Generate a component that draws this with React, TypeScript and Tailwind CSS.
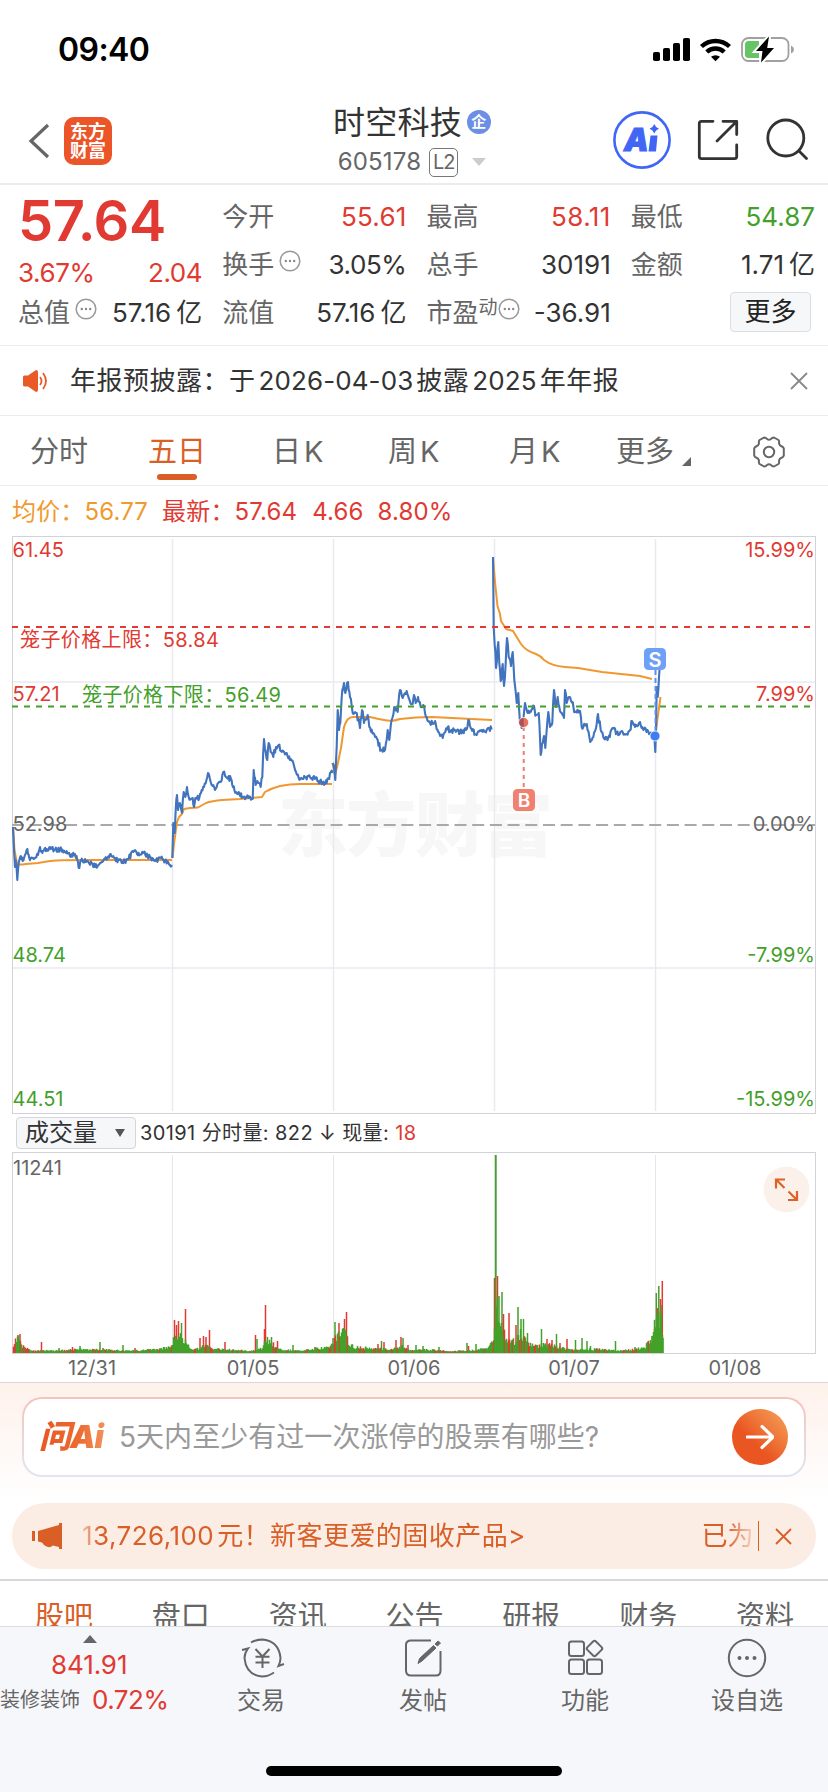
import React from 'react';

type Point = [number, number];

// price curves, one list per trading day
const priceDays: Point[][] = [
  [[13, 827], [14, 850], [15, 867], [15.7, 860], [17.3, 880], [18.7, 863], [20.7, 856], [22.7, 861], [25, 855], [27.3, 849], [29.3, 858], [33, 858], [38, 855], [40, 847], [42.3, 853], [46.7, 849], [50, 847], [54.3, 850], [60, 849], [65, 852], [70, 856], [75, 854], [77.3, 860], [79.3, 868], [81, 860], [86.7, 861], [91.7, 863], [95, 867], [100, 863], [105, 859], [110.7, 854], [115, 858], [121.7, 863], [128, 859], [134, 851], [137, 854], [143, 853], [150, 857], [155, 861], [160, 858], [165, 861], [170, 865], [172, 865]],
  [[172.3, 858], [173.3, 823], [174.7, 833], [175.7, 810], [177, 795], [178, 810], [179.7, 803], [182, 813], [183.7, 792], [185.3, 797], [187, 787], [188.7, 797], [192.7, 798], [194, 807], [196, 798], [199.3, 798], [201.7, 790], [204, 787], [208, 773], [210.7, 782], [215, 790], [218.3, 783], [220.7, 782], [223.3, 772], [226, 777], [228.7, 776], [232.3, 785], [236, 792], [238.7, 792], [242.7, 797], [248.3, 798], [252.7, 799], [253.7, 770], [255.7, 785], [258.3, 783], [260.7, 787], [262.3, 777], [264, 739], [265.7, 752], [267.3, 760], [268.7, 743], [270.7, 752], [273.3, 757], [276, 747], [278.7, 745], [281.7, 752], [286.7, 753], [290, 760], [293.3, 763], [296, 772], [298.7, 778], [305, 777], [311.7, 778], [314, 776], [318.3, 781], [326.7, 783], [330, 773], [332.5, 773]],
  [[332.7, 763], [335.3, 780], [336.7, 747], [337.7, 710], [339, 730], [340.3, 723], [342.3, 690], [344, 683], [345.3, 693], [348, 682], [350, 697], [352.7, 713], [356, 713], [360, 728], [362, 710], [364, 723], [367.7, 715], [369.3, 727], [373.3, 733], [377.7, 740], [381, 750], [385, 750], [387.7, 730], [389.3, 740], [391.7, 720], [395, 707], [397.7, 712], [400, 690], [402.7, 698], [406.7, 691], [408.7, 698], [412, 704], [414, 695], [415.7, 703], [418, 697], [420.7, 707], [423.3, 705], [426.7, 717], [430, 723], [435, 721], [438.3, 732], [442.7, 738], [445.3, 732], [447.7, 727], [450, 732], [455, 730], [460, 732], [466, 730], [468.3, 720], [470.7, 728], [476.7, 735], [481.7, 730], [486.7, 730], [492.3, 728]],
  [[493, 557], [493.7, 627], [494.7, 645], [496, 668], [498.3, 642], [499.3, 663], [500.7, 681], [502.7, 664], [504, 686], [505.7, 663], [507, 638], [508.7, 657], [511, 666], [512.7, 652], [514.3, 680], [516.7, 703], [518.3, 693], [520, 723], [521.7, 728], [523.3, 720], [525, 703], [526.7, 710], [529.3, 713], [534, 706], [536, 715], [538.7, 713], [540.7, 755], [542.7, 743], [544, 736], [545.3, 748], [546.7, 730], [548.3, 712], [550, 727], [552.3, 723], [554, 690], [556, 707], [557.7, 697], [560, 711], [564, 718], [565, 690], [566.7, 703], [569.3, 697], [572.7, 702], [575, 712], [580, 711], [581.7, 727], [586.7, 724], [590.3, 742], [593.3, 737], [596, 728], [598, 714], [600.7, 730], [603.3, 737], [608.3, 738], [612.7, 728], [616.7, 733], [626.7, 734], [630, 730], [632, 721], [635, 727], [640, 722], [643.3, 730], [647.3, 730], [650, 734], [652.7, 734]],
  [[654, 737], [655.3, 752], [656, 730], [656.7, 687], [657.7, 697], [659, 677], [660, 663], [660.7, 657]],
];

const avgDays: string[] = [
  'M13 827 L14.5 850 L17 864 Q19 865 26 864 L38 863 L50 861 Q62 860 80 860 L172 860',
  'M172.5 858 L174.5 840 L177 822 L179 817 L182 814 L184 809 L190 808 L198 807.5 L206 803 Q212 801 222 800 L240 799 L262 797 L265 792 Q272 788 280 786 Q290 784 300 784 L332 784',
  'M332.5 763 L335 775 L337.5 765 L341 748 L344 727 Q347 717 353 717 L370 717 Q378 719 384 720 Q392 722 400 719 Q416 717 432 717 L492 720',
  'M493 557 L495 582 L497.5 606 L500 614 L501 621 L506 629 L513 631 L521 644 Q526 651 536 654 Q541 656 544 660 Q552 666 565 667 L578 668 L602 672 L640 676 L648 678 L652 679',
  'M655.5 735 L658 715 L660.5 697',
];

// small fixed-seed generator, keeps the drawing identical on every render
function makeNoise(seed: number) {
  let s = seed;
  return () => {
    s = (s * 16807) % 2147483647;
    return s / 2147483647;
  };
}

function pricePath(points: Point[], seed: number) {
  const noise = makeNoise(seed);
  let d = `M${points[0][0]} ${points[0][1]}`;
  for (let i = 1; i < points.length; i++) {
    const [x0, y0] = points[i - 1];
    const [x1, y1] = points[i];
    const steps = Math.max(1, Math.round((x1 - x0) / 0.8));
    const amp = Math.abs(y1 - y0) > 8 ? 5 : 3.4;
    for (let k = 1; k < steps; k++) {
      const t = k / steps;
      d += ` L${(x0 + (x1 - x0) * t).toFixed(1)} ${(y0 + (y1 - y0) * t + (noise() - 0.5) * amp * 1.5).toFixed(1)}`;
    }
    d += ` L${x1} ${y1}`;
  }
  return d;
}

// ceiling of the ordinary volume bars: [x, height]
const volumeLevel: Point[] = [
  [13, 9], [16, 16], [19, 16], [22, 9], [27, 5], [34, 3], [60, 3], [80, 5], [100, 4], [130, 3], [150, 4], [162, 5], [172, 10], [174, 18], [179, 22], [186, 14], [190, 5], [200, 5], [206, 12], [211, 5], [230, 4], [252, 2.5], [262, 6], [267, 16], [275, 9], [282, 4], [300, 3], [322, 6], [332, 10], [336, 20], [341, 22], [345, 26], [349, 12], [354, 7], [370, 6], [390, 5], [402, 8], [410, 4], [430, 4], [450, 2.5], [470, 3], [488, 6], [493, 14], [496, 62], [500, 36], [504, 24], [510, 15], [516, 14], [521, 25], [526, 14], [535, 8], [542, 10], [555, 9], [565, 5], [580, 4], [600, 5], [616, 3], [632, 4], [645, 7], [652, 18], [656, 44], [661, 46], [663, 14],
];

// single tall bars: [x, height, rising]
const volumeSpikes: [number, number, boolean][] = [
  [18, 18, true], [20, 19, true], [41.5, 11, true], [59, 5, false], [72.5, 6, true], [80, 7, false], [100, 11, false], [103, 5, true], [123, 8, false], [135, 5, true],
  [174.5, 33, true], [176.5, 28, true], [178.5, 32, true], [181.5, 30, false], [185.5, 44, true], [200, 15, true], [203.5, 17, true], [206, 16, true], [209.5, 23, true], [225, 11, true], [255.5, 18, true], [257, 14, false], [264.5, 24, true], [265.5, 48, true], [271.5, 16, false], [277.5, 12, true], [293, 8, false], [315, 6, true],
  [333, 15, false], [335, 31, false], [339, 30, true], [343, 24, true], [344.5, 34, true], [346.5, 41, true], [378, 9, true], [381.5, 12, false], [384, 11, true], [396, 13, true], [401, 16, true], [403, 15, false], [408, 8, true], [416, 8, false], [423, 7, false], [439, 6, false], [467, 10, false], [468.5, 7, true], [476, 9, false],
  [494.5, 75, true], [497.5, 77, true], [499, 57, false], [502, 61, false], [503.5, 39, true], [509, 40, true], [516, 28, true], [518, 46, false], [521, 34, false], [523.5, 34, false], [527.5, 20, false], [541.5, 24, false], [547, 14, true], [552, 13, true], [556.5, 19, false], [560, 10, true], [567, 14, true], [575.5, 13, false], [582, 15, false], [587, 12, false], [590.5, 7, false], [615.5, 12, false], [635, 6, false], [647, 10, true], [652, 17, false], [654.5, 24, true], [656.3, 60, false], [657.8, 45, true], [658.8, 67, false], [660.5, 54, true], [661, 48, false], [662.3, 72, true], [663, 15, false],
];

function levelAt(x: number) {
  for (let i = 1; i < volumeLevel.length; i++) {
    const [x0, h0] = volumeLevel[i - 1];
    const [x1, h1] = volumeLevel[i];
    if (x <= x1) return h0 + ((h1 - h0) * (x - x0)) / (x1 - x0);
  }
  return 0;
}

function buildVolume() {
  const noise = makeNoise(77);
  const bars: [number, number, boolean][] = [];
  for (let x = 13.5; x < 663; x += 1) {
    const red = noise() < 0.2;
    bars.push([x, Math.max(1.5, levelAt(x) * (0.55 + noise() * 0.5)), red]);
  }
  return [...volumeSpikes, ...bars];
}

const volumeBars = buildVolume();

const RED = '#e03a32';
const GREEN = '#43a02a';

function Dots({ className = '' }: { className?: string }) {
  return (
    <svg className={`h-[22px] w-[22px] shrink-0 ${className}`} viewBox="0 0 22 22" fill="none">
      <circle cx="11" cy="11" r="9.8" stroke="#999" strokeWidth="1.5" />
      <circle cx="6.8" cy="11" r="1.2" fill="#888" />
      <circle cx="11" cy="11" r="1.2" fill="#888" />
      <circle cx="15.2" cy="11" r="1.2" fill="#888" />
    </svg>
  );
}

function StatusBar() {
  return (
    <div className="flex h-[98px] shrink-0 items-center justify-between pt-[2px] pr-[33px] pl-[58px]">
      <span className="text-[32px] leading-none font-semibold tracking-[-0.6px] text-black">09:40</span>
      <svg className="h-[30px] w-[144px]" viewBox="651 35 144 30">
        <rect x="653" y="52" width="7" height="9" rx="1.8" />
        <rect x="663" y="48" width="7" height="13" rx="1.8" />
        <rect x="673" y="43" width="7" height="18" rx="1.8" />
        <rect x="683" y="38" width="7" height="23" rx="1.8" />
        <g fill="none" stroke="#000" strokeWidth="4.4">
          <path d="M701.5 46.5 a20.5 20.5 0 0 1 28 0" />
          <path d="M706.8 52 a12.6 12.6 0 0 1 17.4 0" />
        </g>
        <path d="M711 56.8 a7 7 0 0 1 9 0 L715.5 61.3z" />
        <rect x="742" y="38" width="46.5" height="23" rx="6.5" fill="none" stroke="#a0a0a0" strokeWidth="1.8" />
        <path d="M791 45.5 q3 1.5 3 4 t-3 4z" fill="#a0a0a0" />
        <path d="M748.5 41 H759 V58 H748.5 Q745 58 745 54.5 V44.5 Q745 41 748.5 41z" fill="#65c466" />
        <path d="M769 36.5 L756 51 H762.5 L761 62.5 L774 48 H767.2z" stroke="#fff" strokeWidth="4" />
        <path d="M769 36.5 L756 51 H762.5 L761 62.5 L774 48 H767.2z" />
      </svg>
    </div>
  );
}

function Header() {
  return (
    <div className="flex h-[87px] shrink-0 items-center border-b-2 border-[#ececec] pl-7">
      <div className="flex w-[299px] items-center">
        <svg className="h-[36px] w-[22px]" viewBox="0 0 22 36" fill="none" stroke="#666" strokeWidth="3.2">
          <path d="M20 2 L3 18 L20 34" />
        </svg>
        <div className="ml-[14px] flex h-[48px] w-[48px] flex-col items-center justify-center rounded-[10px] bg-[#ec5528] text-[18px] leading-[19px] font-bold text-white">
          <span>东方</span>
          <span>财富</span>
        </div>
      </div>
      <div className="flex w-[170px] flex-col items-center">
        <div className="flex items-center gap-[5px] text-[32px] leading-[40px] tracking-[0.2px] text-[#333]">
          时空科技
          <span className="mb-[3px] flex h-6 w-6 items-center justify-center rounded-full bg-[#6b8fe6] text-[15px] leading-none font-bold text-white">企</span>
        </div>
        <div className="mt-[3px] flex items-center text-[24px] leading-[32px] text-[#666]">
          <span className="tracking-[0.2px]">605178</span>
          <span className="ml-[8px] flex h-[29px] w-[29px] items-center justify-center rounded-[5px] border-[1.5px] border-[#777] text-[20px] leading-none tracking-[-1px]">L2</span>
          <svg className="ml-[14px] h-[8px] w-[14px]" viewBox="0 0 14 8">
            <path d="M0 0 H14 L7 8z" fill="#ccc" />
          </svg>
        </div>
      </div>
      <svg className="mb-[2px] ml-[115px] h-[60px] w-[200px]" viewBox="612 110 200 60" fill="none">
        <circle cx="642" cy="140" r="27.6" stroke="#4166f5" strokeWidth="2.6" />
        <text x="624" y="151" className="fill-[#4166f5] stroke-[#4166f5] text-[31px] font-black italic" strokeWidth="1">A</text>
        <path d="M650.5 135.5 H657.5 L656 151.5 H648.5z" fill="#4166f5" />
        <path d="M654.3 124 Q655.5 127.5 659 128.7 Q655.5 130 654.3 133.5 Q653 130 649.5 128.7 Q653 127.5 654.3 124z" fill="#4166f5" />
        <g stroke="#333" strokeWidth="2.8" strokeLinecap="round" strokeLinejoin="round">
          <path d="M713 121.3 H701.5 Q699.3 121.3 699.3 123.5 V156.5 Q699.3 158.7 701.5 158.7 H734.5 Q736.7 158.7 736.7 156.5 V145" />
          <path d="M723 121.3 H736.7 V134.5 M736 122 L717 141" />
          <circle cx="785.8" cy="138" r="18" />
          <path d="M799 151 L806.5 158.5" />
        </g>
      </svg>
    </div>
  );
}

type CellProps = { label: string; value: string; unit?: string; tone?: string; info?: boolean; sup?: string };

function Cell({ label, value, unit, tone = 'text-[#333]', info, sup }: CellProps) {
  return (
    <div className="flex h-12 items-center justify-between whitespace-nowrap">
      <span className="flex items-center text-[#666]">
        {label}
        {sup && <span className="mb-3 text-[19px]">{sup}</span>}
        {info && <Dots className={sup ? 'mb-2' : 'mb-2 ml-[5px]'} />}
      </span>
      <span className={tone}>
        {value}
        {unit && <span className="ml-[5px]">{unit}</span>}
      </span>
    </div>
  );
}

function Quote() {
  return (
    <div className="grid h-[161px] shrink-0 grid-cols-4 gap-x-5 border-b border-[#ececec] pt-[8px] pr-[13px] pl-[18px] text-[26px] leading-none">
      <div className="text-[#e03a32]">
        <div className="flex h-[55px] items-center text-[56px] font-semibold tracking-[-0.4px]">57.64</div>
        <div className="flex h-[41px] items-center justify-between pt-[8px] tracking-[-0.4px]">
          <span>3.67%</span>
          <span>2.04</span>
        </div>
        <Cell label="总值" value="57.16" unit="亿" info />
      </div>
      <div>
        <Cell label="今开" value="55.61" tone="text-[#e03a32] tracking-[0.2px]" />
        <Cell label="换手" value="3.05%" tone="text-[#333] tracking-[-0.4px]" info />
        <Cell label="流值" value="57.16" unit="亿" />
      </div>
      <div>
        <Cell label="最高" value="58.11" tone="text-[#e03a32] tracking-[0.4px]" />
        <Cell label="总手" value="30191" />
        <Cell label="市盈" sup="动" value="-36.91" info />
      </div>
      <div>
        <Cell label="最低" value="54.87" tone="text-[#43a02a]" />
        <Cell label="金额" value="1.71" unit="亿" />
        <div className="flex h-12 items-center justify-end pr-[4px] pb-[2px]">
          <span className="flex h-[40px] w-[81px] items-center justify-center rounded-[4px] border-[1.5px] border-[#dcdee3] bg-[#f6f7f9] text-[#222]">更多</span>
        </div>
      </div>
    </div>
  );
}

function Notice() {
  return (
    <div className="flex h-[70px] shrink-0 items-center border-b border-[#ececec] pr-5 pl-[22px]">
      <svg className="h-[24px] w-[28px]" viewBox="0 0 28 24">
        <path d="M1 8 Q1 6.5 2.5 6.5 H6 L14 1 Q16 1 16 3 V21 Q16 23 14 23 L6 17.5 H2.5 Q1 17.5 1 16z" fill="#ea5a27" />
        <path d="M18 8 Q21 12 18 16 M21 4 Q27 12 21 20" fill="none" stroke="#ea5a27" strokeWidth="1.8" />
      </svg>
      <span className="ml-5 flex-1 text-[26px] leading-none tracking-[0.5px] whitespace-nowrap text-[#333]">
        年报预披露：于<span className="mx-[3px] tracking-[0.1px]">2026-04-03</span>披露<span className="mx-[3px] tracking-[0.1px]">2025</span>年年报
      </span>
      <svg className="h-[18px] w-[18px]" viewBox="0 0 18 18" stroke="#888" strokeWidth="1.8">
        <path d="M1 1 L17 17 M17 1 L1 17" />
      </svg>
    </div>
  );
}

function PeriodTabs() {
  return (
    <div className="flex h-[70px] shrink-0 items-center border-b border-[#ececec] pt-[2px] pl-[30px] text-[29px] leading-none text-[#666]">
      <span className="w-[118px]">分时</span>
      <span className="relative w-[124px] text-[#d95f27]">
        五日
        <span className="absolute top-[37px] left-[9px] h-[6px] w-10 rounded-[3px] bg-[#d95f27]" />
      </span>
      <span className="w-[116px] tracking-[3px]">日K</span>
      <span className="w-[121px] tracking-[3px]">周K</span>
      <span className="w-[107px] tracking-[3px]">月K</span>
      <span className="flex w-[136px] items-end gap-[8px]">
        更多
        <svg className="h-[9px] w-[9px]" viewBox="0 0 9 9">
          <path d="M9 0 V9 H0z" fill="#666" />
        </svg>
      </span>
      <svg className="h-[34px] w-[34px]" viewBox="0 0 34 34" fill="none" stroke="#666" strokeWidth="2" strokeLinejoin="round">
        <path d="M12 2.5 Q14 2.5 15 4 Q17 5.5 19 4 Q20 2.5 22 2.5 L26.5 5 Q27.5 6.5 27 8.5 Q27.5 10.5 29.5 11.2 Q31.5 12 31.8 13.5 V20.5 Q31.5 22 29.5 22.8 Q27.5 23.5 27 25.5 Q27.5 27.5 26.5 29 L22 31.5 Q20 31.5 19 30 Q17 28.5 15 30 Q14 31.5 12 31.5 L7.5 29 Q6.5 27.5 7 25.5 Q6.5 23.5 4.5 22.8 Q2.5 22 2.2 20.5 V13.5 Q2.5 12 4.5 11.2 Q6.5 10.5 7 8.5 Q6.5 6.5 7.5 5z" />
        <circle cx="17" cy="17" r="5.2" />
      </svg>
    </div>
  );
}

function Legend() {
  return (
    <div className="flex h-[49px] shrink-0 items-center pt-[2px] pl-3 text-[24px] leading-none tracking-[0.15px] whitespace-nowrap text-[#e03a32]">
      <span className="text-[#f09a2e]">均价：56.77</span>
      <span className="ml-[14px]">最新：57.64</span>
      <span className="ml-[15px]">4.66</span>
      <span className="ml-[14px]">8.80%</span>
    </div>
  );
}

function PriceChart() {
  return (
    <svg className="block h-[579px] w-[828px] shrink-0" viewBox="0 535 828 579" fill="none">
      <text x="278" y="851" textLength="275" className="fill-[#f7f7f7] text-[70px] font-black">东方财富</text>
      <path d="M172.5 539 V1111 M333.5 539 V1111 M494.5 539 V1111 M655.5 539 V1111 M13 682 H815 M13 968 H815" stroke="#e9e9ef" strokeWidth="1.5" />
      <rect x="12.5" y="536.5" width="803" height="577" stroke="#d2d2d8" />
      <path d="M12 825 H815" stroke="#a9a9a9" strokeWidth="1.8" strokeDasharray="12 5.7" />
      {avgDays.map((d) => (
        <path key={d} d={d} stroke="#f0982f" strokeWidth="2" strokeLinejoin="round" />
      ))}
      {priceDays.map((points, i) => (
        <path key={i} d={pricePath(points, 101 + i * 37)} stroke="#4273bd" strokeWidth="2.1" strokeLinejoin="round" />
      ))}
      <path d="M12 627 H812" stroke={RED} strokeWidth="2" strokeDasharray="6 6" />
      <path d="M12 706.5 H812" stroke={GREEN} strokeWidth="2" strokeDasharray="6 6" />

      <path d="M655.5 670 V735" stroke="#5b8ff5" strokeWidth="2" strokeDasharray="5 3" />
      <circle cx="655" cy="736" r="5" fill="#3f7df0" stroke="#fff" strokeWidth="0.8" />
      <rect x="644" y="648" width="22" height="22" rx="4.5" fill="#6fa0f8" />
      <text x="655" y="666.5" textAnchor="middle" className="fill-white text-[20px] font-semibold">S</text>
      <path d="M523.7 727 V789" stroke="#ee7d6c" strokeWidth="2" strokeDasharray="4 4" />
      <circle cx="523.7" cy="722.5" r="5" fill="#e8705f" stroke="#fff" strokeWidth="0.8" />
      <path d="M523.7 718 a4.5 4.5 0 0 0 0 9z" fill="#b04f5c" />
      <rect x="513" y="789" width="22" height="22" rx="4.5" fill="#f08070" />
      <text x="524" y="807" textAnchor="middle" className="fill-white text-[19px] font-semibold">B</text>

      <g className="text-[20px]">
        <g fill={RED}>
          <text x="12.5" y="557">61.45</text>
          <text x="12.5" y="701">57.21</text>
          <text x="815" y="557" textAnchor="end">15.99%</text>
          <text x="815" y="701" textAnchor="end">7.99%</text>
          <text x="20" y="647" textLength="199">笼子价格上限：58.84</text>
        </g>
        <g fill={GREEN}>
          <text x="82" y="702" textLength="199">笼子价格下限：56.49</text>
          <text x="12.5" y="962">48.74</text>
          <text x="12.5" y="1105.5">44.51</text>
          <text x="815" y="962" textAnchor="end">-7.99%</text>
          <text x="815" y="1105.5" textAnchor="end">-15.99%</text>
        </g>
        <g fill="#666">
          <text x="12.5" y="831">52.98</text>
          <text x="815" y="831" textAnchor="end">0.00%</text>
        </g>
      </g>
    </svg>
  );
}

function VolumeHeader() {
  return (
    <div className="flex h-[38px] shrink-0 items-center pl-4 text-[20px] leading-none whitespace-nowrap text-[#333]">
      <span className="flex h-8 w-[120px] items-center justify-between rounded-[4px] border-[1.5px] border-[#d5d6dc] bg-[#f6f7f9] pr-[10px] pl-2 text-[24px]">
        成交量
        <svg className="h-[8px] w-[10px]" viewBox="0 0 10 8">
          <path d="M0 0 H10 L5 8z" fill="#555" />
        </svg>
      </span>
      <span className="ml-[4px] tracking-[0.4px]">30191 分时量: 822 ↓ 现量: <span className="text-[#e03a32]">18</span></span>
    </div>
  );
}

function VolumeChart() {
  return (
    <svg className="block h-[230px] w-[828px] shrink-0" viewBox="0 1152 828 230" fill="none">
      <path d="M172.5 1155 V1353 M333.5 1155 V1353 M494.5 1155 V1353 M655.5 1155 V1353" stroke="#e6e6ec" />
      <rect x="12.5" y="1152.5" width="803" height="201" stroke="#d2d2d8" />
      {volumeBars.map(([x, h, rising], i) => (
        <rect key={i} x={x - 0.75} y={1353 - h} width="1.5" height={h} fill={rising ? RED : GREEN} />
      ))}
      <path d="M495.8 1155 V1353" stroke={GREEN} strokeWidth="1.8" />
      <g className="text-[20px]" fill="#666">
        <text x="13" y="1175">11241</text>
        <text x="92" y="1375" textAnchor="middle">12/31</text>
        <text x="253" y="1375" textAnchor="middle">01/05</text>
        <text x="414" y="1375" textAnchor="middle">01/06</text>
        <text x="574" y="1375" textAnchor="middle">01/07</text>
        <text x="735" y="1375" textAnchor="middle">01/08</text>
      </g>
      <circle cx="786.5" cy="1189.5" r="23" fill="#fcf1ea" />
      <path d="M785 1179.5 H776 V1188.5 M776.5 1180 L784.5 1188 M788 1200 H797 V1191 M796.5 1199.5 L788.5 1191.5" stroke="#dc6228" strokeWidth="2.2" />
    </svg>
  );
}

function AskBox() {
  return (
    <div className="h-[121px] shrink-0 border-t border-[#d8d8dc] bg-gradient-to-b from-[#fef1eb] to-white px-[22px] pt-[14px]">
      <div className="rounded-[20px] bg-gradient-to-b from-[#f5c3b8] to-[#dfe5f5] p-[2px]">
        <div className="flex h-[76px] items-center rounded-[18px] bg-white pr-4 pl-[15px]">
          <span className="w-[80px] bg-gradient-to-r from-[#ea5622] via-[#ec6a30] to-[#f4a56c] bg-clip-text text-[32px] leading-[40px] font-black tracking-[-1px] text-transparent italic">问Ai</span>
          <span className="flex-1 text-[28px] leading-none tracking-[0.05px] whitespace-nowrap text-[#999]">5天内至少有过一次涨停的股票有哪些?</span>
          <span className="flex h-14 w-14 items-center justify-center rounded-full bg-gradient-to-tr from-[#ea5622] from-40% to-[#f2a45a]">
            <svg className="h-7 w-7" viewBox="0 0 28 28" fill="none" stroke="#fff" strokeWidth="3.2" strokeLinecap="round" strokeLinejoin="round">
              <path d="M1 14 H27 M16 3.5 L27 14 L16 24.5" />
            </svg>
          </span>
        </div>
      </div>
    </div>
  );
}

function Banner() {
  return (
    <div className="flex h-[78px] shrink-0 border-b-2 border-[#d8d8dc] px-3 pb-[11px]">
      <div className="flex h-[66px] flex-1 items-center rounded-full bg-[#fbece4] pr-6 pl-5 text-[26px] leading-[40px] whitespace-nowrap text-[#d95f27]">
        <svg className="h-[26px] w-[30px]" viewBox="0 0 30 26" fill="#d95f27">
          <path d="M0 8 H3 V18 H0z M6 8 L27 2 V0 H30 V26 H27 V24 L21 22.5 Q17 26 12 22 L10 19.500 L6 18.5z" />
        </svg>
        <span className="ml-[20px] flex-1 tracking-[0.45px] [mask-image:linear-gradient(to_right,rgba(0,0,0,0.3),#000_18px)]">
          <span className="mr-[3px]">13,726,100</span>元！新客更爱的固收产品&gt;
        </span>
        <span className="w-[50px] overflow-hidden [mask-image:linear-gradient(to_right,#000_50%,rgba(0,0,0,0.2))]">已为</span>
        <span className="ml-[6px] h-[30px] w-[1.5px] bg-[#d95f27]" />
        <svg className="ml-4 h-[17px] w-[17px]" viewBox="0 0 17 17" stroke="#d95f27" strokeWidth="1.8">
          <path d="M1 1 L16 16 M16 1 L1 16" />
        </svg>
      </div>
    </div>
  );
}

function SectionTabs() {
  return (
    <div className="flex h-[45px] shrink-0 justify-between overflow-hidden pt-[16px] pr-[34px] pl-[35px] text-[29px] leading-[40px] text-[#666]">
      <span className="text-[#d95f27]">股吧</span>
      <span>盘口</span>
      <span>资讯</span>
      <span>公告</span>
      <span>研报</span>
      <span>财务</span>
      <span>资料</span>
    </div>
  );
}

function NavItem({ label, children }: { label: string; children: React.ReactNode }) {
  return (
    <div className="flex w-[162px] flex-col items-center pt-[9px]">
      <svg className="h-[44px] w-[48px]" viewBox="0 0 48 44" fill="none" stroke="#666" strokeWidth="2">
        {children}
      </svg>
      <span className="mt-[8px] text-[24px] leading-[26px] text-[#666]">{label}</span>
    </div>
  );
}

function BottomBar() {
  return (
    <div className="flex h-[166px] shrink-0 flex-col border-t border-[#dcdcde] bg-[#f6f7fa]">
      <div className="flex h-[135px]">
        <div className="flex w-[180px] flex-col pt-[8px] text-[26px] leading-none tracking-[-0.5px] text-[#e03a32]">
          <svg className="ml-[83px] h-[8px] w-[14px]" viewBox="0 0 14 8">
            <path d="M0 8 H14 L7 0z" fill="#666" />
          </svg>
          <span className="mt-[9px] ml-[51px] tracking-[-0.1px]">841.91</span>
          <span className="mt-[9px] flex items-center whitespace-nowrap">
            <span className="text-[20px] tracking-normal text-[#666]">装修装饰</span>
            <span className="ml-[12px]">0.72%</span>
          </span>
        </div>
        <NavItem label="交易">
          <path d="M14 6.5 Q19 3.5 26 3.5 Q42 5.5 43.5 22 Q43.5 26 41.5 30 L47 28 M5 14 L11 12.5 Q7.5 17 7.5 22 Q9 39 25 40.5 Q31 40.5 37 36.5" />
          <path d="M18.5 13 L25.5 20.5 L32.5 13 M18.5 20.8 H32.5 M18.5 26.5 H32.5 M25.5 20.5 V32" />
        </NavItem>
        <NavItem label="发帖">
          <path d="M32 4.5 H12 Q7 4.5 7 9 V34.5 Q7 39.5 12 39.5 H37 Q41.5 39.5 41.5 34.5 V15" />
          <path d="M19 27.5 L20.5 22.5 L34.5 9.5 L37 12 L23 25z M36 8 L39 5 L41.5 7 L38.5 10z" fill="#666" strokeWidth="1" />
        </NavItem>
        <NavItem label="功能">
          <rect x="8" y="5.5" width="15" height="14.5" rx="2.5" />
          <rect x="8" y="23.5" width="15" height="14.5" rx="2.5" />
          <rect x="26" y="23.5" width="15" height="14.5" rx="2.5" />
          <rect x="27.5" y="6.5" width="12" height="12" rx="2" transform="rotate(45 33.5 12.5)" />
        </NavItem>
        <NavItem label="设自选">
          <circle cx="24" cy="22" r="18.2" />
          <g fill="#666" stroke="none">
            <circle cx="16.5" cy="22" r="2" />
            <circle cx="24" cy="22" r="2" />
            <circle cx="31.5" cy="22" r="2" />
          </g>
        </NavItem>
      </div>
      <div className="mx-auto mt-[4px] h-[10px] w-[296px] rounded-full bg-black" />
    </div>
  );
}

export default function App() {
  return (
    <div className="flex h-[1792px] w-[828px] flex-col overflow-hidden bg-white font-['Inter','Noto_Sans_CJK_SC',sans-serif]" lang="zh-CN">
      <StatusBar />
      <Header />
      <Quote />
      <Notice />
      <PeriodTabs />
      <Legend />
      <PriceChart />
      <VolumeHeader />
      <VolumeChart />
      <AskBox />
      <Banner />
      <SectionTabs />
      <BottomBar />
    </div>
  );
}
